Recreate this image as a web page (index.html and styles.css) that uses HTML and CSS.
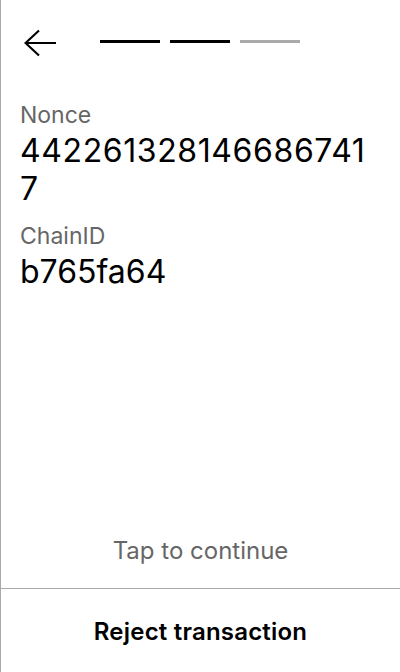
FILE: index.html
```html
<!DOCTYPE html>
<html lang="en">
<head>
<meta charset="utf-8">
<title>Transaction</title>
<link rel="stylesheet" href="styles.css">
</head>
<body>
<div class="screen">
  <header class="header">
    <svg class="back" width="32" height="30" viewBox="0 0 32 30" aria-hidden="true">
      <path d="M1 15 H32 M15 2.5 L1.5 15 L15 27.5" fill="none" stroke="#000" stroke-width="2.2"/>
    </svg>
    <div class="steps">
      <span class="step done"></span>
      <span class="step done"></span>
      <span class="step"></span>
    </div>
  </header>
  <main class="content">
    <div class="field">
      <div class="label">Nonce</div>
      <div class="value num">4422613281466867417</div>
    </div>
    <div class="field">
      <div class="label">ChainID</div>
      <div class="value">b765fa64</div>
    </div>
  </main>
  <div class="tap">Tap to continue</div>
  <button class="reject">Reject transaction</button>
</div>
</body>
</html>
```

FILE: styles.css
```css
html, body {
  margin: 0;
  padding: 0;
  background: #fff;
}

body {
  font-family: Inter, "Noto Sans", sans-serif;
  color: #000;
}

.screen {
  width: 400px;
  height: 672px;
  box-sizing: border-box;
  border-left: 1px solid #aaa;
  display: flex;
  flex-direction: column;
}

.header {
  display: flex;
  align-items: flex-start;
  padding: 28px 0 0 23px;
  height: 86px;
  box-sizing: border-box;
}

.back {
  display: block;
  flex: none;
}

.steps {
  display: flex;
  gap: 10px;
  margin-left: 44px;
  margin-top: 12px;
}

.step {
  display: block;
  width: 60px;
  height: 3px;
  background: #aaa;
}

.step.done {
  background: #000;
}

.content {
  flex: 1;
  padding: 15px 20px 0 19px;
}

.field {
  margin-bottom: 14px;
}

.label {
  font-size: 23px;
  line-height: 28px;
  color: #666;
}

.value {
  font-size: 32px;
  line-height: 38px;
  margin-top: 3px;
  word-break: break-all;
}

.num {
  letter-spacing: 0.6px;
}

.tap {
  text-align: center;
  font-size: 24px;
  line-height: 28px;
  color: #666;
  margin-bottom: 23px;
}

.reject {
  display: block;
  width: 100%;
  height: 84px;
  box-sizing: border-box;
  border: none;
  border-top: 1px solid #aaa;
  background: #fff;
  padding: 29px 0 26px;
  font-family: Inter, "Noto Sans", sans-serif;
  font-size: 24px;
  line-height: 28px;
  font-weight: 600;
  letter-spacing: 0.2px;
  color: #000;
  cursor: pointer;
}
```
